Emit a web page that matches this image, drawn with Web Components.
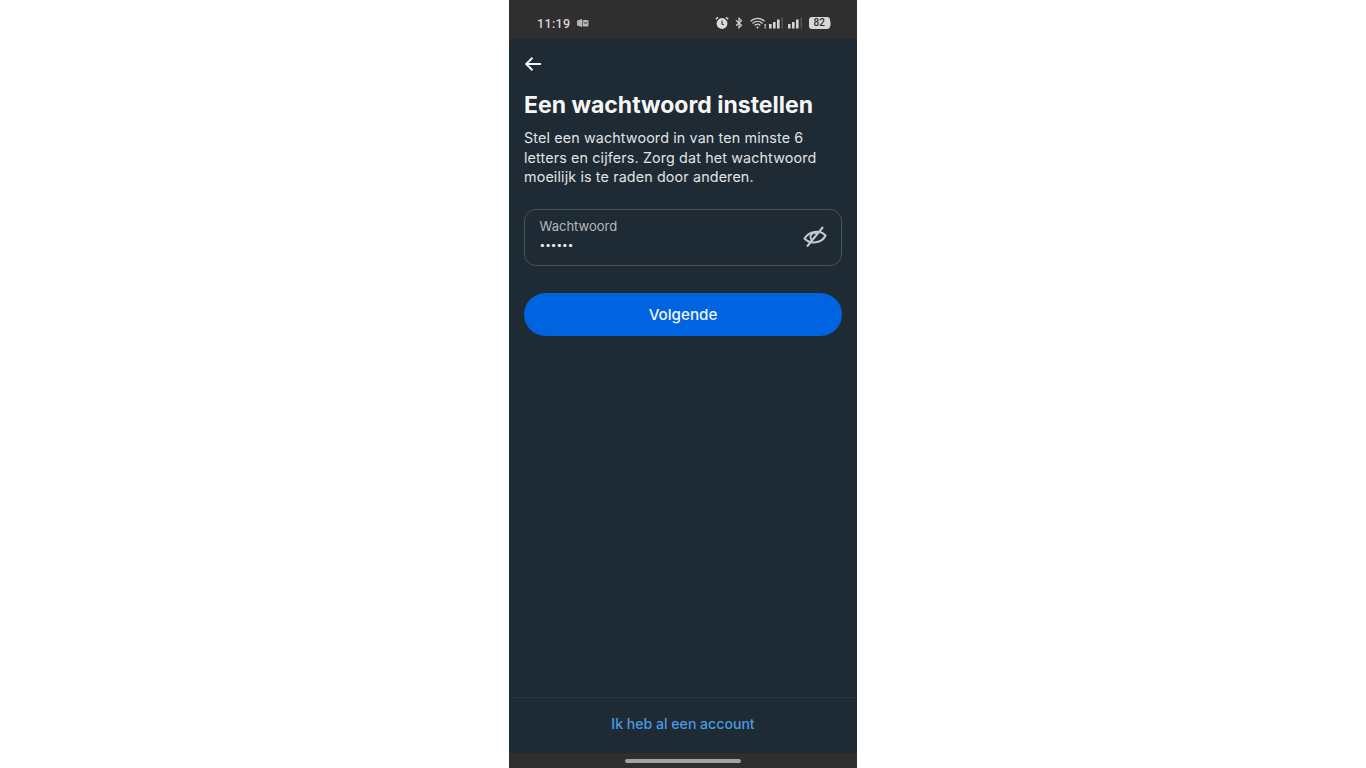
<!DOCTYPE html>
<html lang="nl"><head><meta charset="utf-8"><title>Een wachtwoord instellen</title>
<style>html,body{margin:0;height:100%;background:#fff;overflow:hidden}body{display:flex;justify-content:center;font-family:Inter,"Liberation Sans",sans-serif}</style>
</head><body>
<phone-screen>
<status-bar slot="status"></status-bar>
<back-arrow></back-arrow>
<h-title>Een wachtwoord instellen</h-title>
<p-text>Stel een wachtwoord in van ten minste 6<br>letters en cijfers. Zorg dat het wachtwoord<br>moeilijk is te raden door anderen.</p-text>
<password-field label="Wachtwoord" value="••••••"></password-field>
<primary-button>Volgende</primary-button>
<footer-link slot="footer">Ik heb al een account</footer-link>
</phone-screen>
<script>
function def(name, html){customElements.define(name,class extends HTMLElement{constructor(){super();this.attachShadow({mode:'open'}).innerHTML=typeof html==='function'?html(this):html}})}
const sig=(ml)=>`<svg style="margin-left:${ml}px" width="15" height="12" viewBox="0 0 15 12"><rect x="0" y="7" width="2.600" height="4.500" fill="#d4d4d4"/><rect x="4" y="5" width="2.600" height="6.500" fill="#d4d4d4"/><rect x="8" y="2.500" width="2.600" height="9" fill="#d4d4d4"/><rect x="12.500" y="0.500" width="1.500" height="11" fill="#555"/></svg>`;
def('phone-screen',`<style>:host{display:flex;flex-direction:column;width:348px;height:768px;background:#1e2a34;box-sizing:border-box}
.main{flex:1;display:flex;flex-direction:column;padding:0 15px;min-height:0}
.foot{height:56px;border-top:1px solid #27333d;display:flex;align-items:center;justify-content:center;box-sizing:border-box;padding-bottom:4px}
.nav{height:15px;background:#2f2f2f;display:flex;justify-content:center;align-items:center}
.pill{width:116px;height:4px;border-radius:2px;background:#a3a3a3}</style>
<slot name="status"></slot><div class="main"><slot></slot></div><div class="foot"><slot name="footer"></slot></div><div class="nav"><div class="pill"></div></div>`);
def('status-bar',`<style>:host{display:flex;align-items:center;height:39px;background:#2f2f2f;color:#d4d4d4;box-sizing:border-box;padding:7px 26px 0 28px;flex:none}
.t{font:500 12.500px Roboto,sans-serif;letter-spacing:.35px;color:#d6d6d6}
svg{display:block;flex:none}.sp{flex:1}</style>
<span class="t">11:19</span>
<svg style="margin-left:7px" width="12" height="10" viewBox="0 0 12 10" fill="#b5b5b5"><path d="M0 2.500 5 1v8L0 7.500z"/><rect x="5.500" y="2" width="6" height="6.500" rx="1"/><path d="M6.500 4l2 1.500 2-1.500" stroke="#2f2f2f" fill="none"/></svg>
<span class="sp"></span>
<svg width="14" height="14" viewBox="0 0 14 14"><circle cx="7" cy="7.500" r="5.400" fill="#dcdcdc"/><path d="M7 4.500V8l1.800 1" stroke="#2f2f2f" stroke-width="1.100" fill="none"/><path d="M.8 3.200 3 1.200M13.200 3.200 11 1.200" stroke="#dcdcdc" stroke-width="1.500"/></svg>
<svg style="margin-left:6px" width="8" height="12" viewBox="0 0 8 12" fill="none" stroke="#cfcfcf" stroke-width="1.200"><path d="M1 3.200 6.500 8.300 4 10.800V1.200L6.500 3.700 1 8.800"/></svg>
<svg style="margin-left:6px" width="18" height="12" viewBox="0 0 17 12" fill="none" stroke="#d4d4d4" stroke-width="1.300"><path d="M1 4.200C5 .5 11 .5 15 4.200M3 6.400C6 3.700 10 3.700 13 6.400M5.200 8.400C6.800 7 9.200 7 10.800 8.400"/><circle cx="8" cy="10.500" r="1" fill="#d4d4d4" stroke="none"/><rect x="15" y="7" width="1.300" height="2.500" fill="#d4d4d4" stroke="none"/><rect x="15" y="10" width="1.300" height="1.300" fill="#d4d4d4" stroke="none"/></svg>
${sig(2)}${sig(4)}
<span style="margin-left:6px;display:flex;align-items:center"><span style="width:20.500px;height:12px;background:#d8d8d8;border-radius:3px;color:#2b2b2b;font:500 10px/12px Roboto,sans-serif;text-align:center">82</span><span style="width:1.500px;height:5px;background:#888;border-radius:0 1px 1px 0"></span></span>`);
def('back-arrow',`<style>:host{display:block;height:50px;flex:none;padding-top:17px;box-sizing:border-box}svg{display:block}</style>
<svg width="18" height="16" viewBox="0 0 18 16" fill="none" stroke="#f4f4f4" stroke-width="2"><path d="M17 8H2.200M8.500 1.800 2.200 8l6.300 6.200"/></svg>`);
def('h-title',`<style>:host{display:block;font:700 23px/32px Inter,sans-serif;color:#f6f6f6;flex:none}</style><slot></slot>`);
def('p-text',`<style>:host{display:block;font:400 14.300px/19.500px Inter,sans-serif;letter-spacing:.14px;color:#e0e3e5;margin-top:7px;flex:none}</style><slot></slot>`);
def('password-field',h=>`<style>:host{display:flex;align-items:center;justify-content:space-between;height:57px;margin-top:22px;border:1px solid #47525b;border-radius:12px;box-sizing:border-box;padding:0 15px 6px 14.500px;flex:none}
.l{font:400 13px/16px Inter,sans-serif;color:#b4b9bd}.v{font:400 10px/12px Inter,sans-serif;color:#f2f2f2;margin-top:4px}
svg{display:block;flex:none;margin-top:6px}</style>
<div><div class="l">${h.getAttribute('label')}</div><div class="v">${h.getAttribute('value')}</div></div>
<svg style="margin-right:-1px" width="24" height="22" viewBox="0 0 24 22" fill="none" stroke="#c6cacd" stroke-width="2"><path d="M1.500 12.500C6 5 17 3.500 22.500 9.500C19 17.500 7 18.500 1.500 12.500Z"/><path d="M8.500 13.500a3.800 3.800 0 0 1 6-5.200"/><path d="M20 1 4 20.500"/></svg>`);
def('primary-button',`<style>:host{display:flex;align-items:center;justify-content:center;height:43px;margin-top:27px;border-radius:22px;background:#0064e0;color:#eef4fc;font:500 15.200px Inter,sans-serif;flex:none}</style><slot></slot>`);
def('footer-link',`<style>:host{display:block;color:#4a9ae0;font:500 14.100px Inter,sans-serif}</style><slot></slot>`);
</script>
</body></html>
